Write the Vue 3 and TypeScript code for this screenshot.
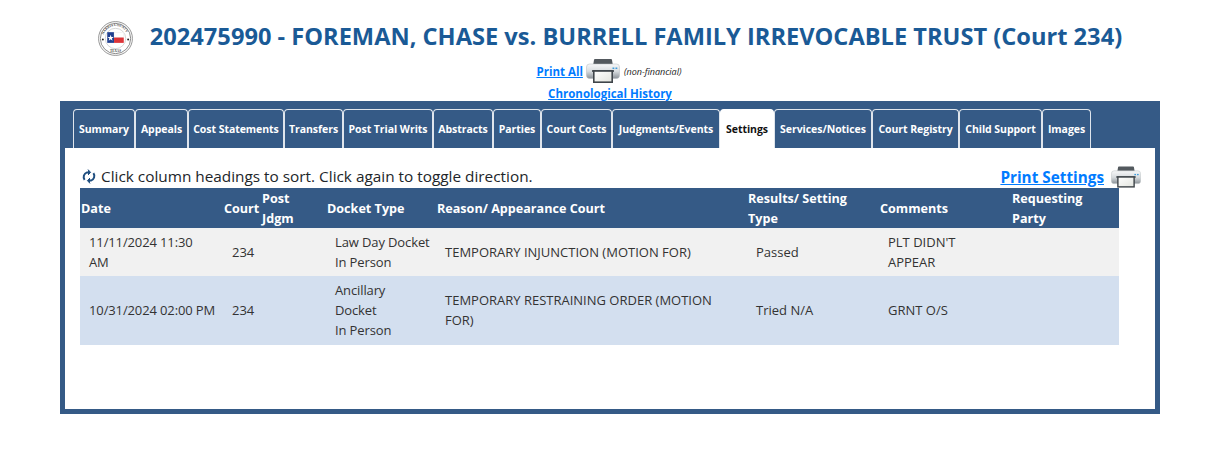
<script setup lang="ts">
interface Row { date: string; court: string; jdgm: string; docket: string; reason: string; result: string; comments: string; party: string }
const tabs: { label: string; width: number; active?: boolean }[] = [
  { label: 'Summary', width: 62 }, { label: 'Appeals', width: 53 }, { label: 'Cost Statements', width: 96 },
  { label: 'Transfers', width: 59 }, { label: 'Post Trial Writs', width: 90 }, { label: 'Abstracts', width: 60 },
  { label: 'Parties', width: 48 }, { label: 'Court Costs', width: 71 }, { label: 'Judgments/Events', width: 108 },
  { label: 'Settings', width: 54, active: true }, { label: 'Services/Notices', width: 98 }, { label: 'Court Registry', width: 87 },
  { label: 'Child Support', width: 83 }, { label: 'Images', width: 49 },
]
const rows: Row[] = [
  { date: '11/11/2024 11:30\nAM', court: '234', jdgm: '', docket: 'Law Day Docket\nIn Person', reason: 'TEMPORARY INJUNCTION (MOTION FOR)', result: 'Passed', comments: "PLT DIDN'T\nAPPEAR", party: '' },
  { date: '10/31/2024 02:00 PM', court: '234', jdgm: '', docket: 'Ancillary\nDocket\nIn Person', reason: 'TEMPORARY RESTRAINING ORDER (MOTION\nFOR)', result: 'Tried N/A', comments: 'GRNT O/S', party: '' },
]
const cols = [143, 38, 65, 111, 311, 132, 132, 107]
</script>

<template>
  <div class="page">
    <svg width="0" height="0" class="defs">
      <defs>
        <linearGradient id="pBody" x1="0" y1="0" x2="0" y2="1">
          <stop offset="0" stop-color="#f7f8f9" /><stop offset="0.5" stop-color="#d8dcdf" /><stop offset="1" stop-color="#8b9298" />
        </linearGradient>
        <linearGradient id="pPaper" x1="0" y1="0" x2="1" y2="1">
          <stop offset="0" stop-color="#ffffff" /><stop offset="1" stop-color="#e2e4de" />
        </linearGradient>
        <g id="printer-shape">
          <path d="M8 1q0-1 1-1h16q1 0 1 1l1 6H7z" fill="#53595e" />
          <rect x="0.5" y="5" width="33" height="14.5" rx="3" fill="url(#pBody)" stroke="#b4b9bd" stroke-width=".5" />
          <rect x="26.5" y="8.5" width="1.8" height="1.5" fill="#3c9bdc" /><rect x="29.5" y="8.5" width="1.8" height="1.5" fill="#3c9bdc" />
          <rect x="6" y="11" width="22" height="2" fill="#555b60" />
          <rect x="7.8" y="12" width="18.4" height="11.2" fill="url(#pPaper)" stroke="#3f454a" stroke-width="1.6" />
        </g>
      </defs>
    </svg>

    <header class="title">
      <svg class="seal" width="35" height="35" viewBox="0 0 36 36">
        <circle cx="18" cy="18" r="17.4" fill="#fff" stroke="#888" stroke-width=".9" />
        <circle cx="18" cy="18" r="15.6" fill="none" stroke="#555" stroke-width=".7" />
        <circle cx="18" cy="18" r="10.5" fill="none" stroke="#aaa" stroke-width=".5" />
        <path id="sealTop" d="M5.2 18a12.8 12.8 0 0 1 25.6 0" fill="none" />
        <text font-size="3.5" font-family="Liberation Serif, serif" font-weight="700" fill="#444"><textPath href="#sealTop" startOffset="4">HARRIS COUNTY</textPath></text>
        <text x="18" y="31.5" font-size="3.4" font-weight="700" font-family="Liberation Serif, serif" text-anchor="middle" fill="#444">TEXAS</text>
        <rect x="9.5" y="11.5" width="7" height="11" fill="#1f3f8f" />
        <rect x="16.5" y="11.5" width="10" height="5.5" fill="#fff" stroke="#ddd" stroke-width=".3" />
        <rect x="16.5" y="17" width="10" height="5.5" fill="#dc3438" />
        <path d="M13 14.2l.8 2.3h2.4l-1.9 1.4.7 2.3-2-1.4-2 1.4.7-2.3-1.9-1.4h2.4z" fill="#fff" />
        <circle cx="5" cy="19" r="1" fill="#222" /><circle cx="31" cy="19" r="1" fill="#222" />
      </svg>
      <h1>202475990 - FOREMAN, CHASE vs. BURRELL FAMILY IRREVOCABLE TRUST (Court 234)</h1>
    </header>

    <div class="print-all">
      <a href="#">Print All</a>
      <svg class="printer" width="34" height="24" viewBox="0 0 34 24"><use href="#printer-shape" /></svg>
      <em>(non-financial)</em>
    </div>
    <div class="chrono"><a href="#">Chronological History</a></div>

    <section class="panel">
      <nav class="tabs">
        <a v-for="t in tabs" :key="t.label" class="tab" :class="{ active: t.active }" :style="{ width: t.width + 'px' }">{{ t.label }}</a>
      </nav>
      <div class="content">
        <div class="hint-row">
          <div class="hint">
            <svg class="refresh" width="14" height="15" viewBox="0 0 14 15" fill="none" stroke="#1f4e7f" stroke-width="2">
              <path d="M2.6 10.8A4.8 4.8 0 0 1 5 3.4h2.4" />
              <path d="M6 .6l2.6 2.8L6 6" fill="#1f4e7f" stroke-width="1" />
              <path d="M11.4 4.2A4.8 4.8 0 0 1 9 11.6H6.6" />
              <path d="M8 14.4l-2.6-2.8L8 9" fill="#1f4e7f" stroke-width="1" />
            </svg>
            <span>Click column headings to sort. Click again to toggle direction.</span>
          </div>
          <div class="print-settings">
            <a href="#">Print Settings</a>
            <svg width="30" height="22" viewBox="0 0 34 24"><use href="#printer-shape" /></svg>
          </div>
        </div>
        <table>
          <colgroup><col v-for="(c, i) in cols" :key="i" :style="{ width: c + 'px' }" /></colgroup>
          <thead>
            <tr>
              <th>Date</th><th>Court</th><th>Post<br />Jdgm</th><th>Docket Type</th>
              <th class="flush">Reason/ Appearance Court</th><th class="flush">Results/ Setting<br />Type</th><th class="flush">Comments</th><th class="flush">Requesting<br />Party</th>
            </tr>
          </thead>
          <tbody>
            <tr v-for="(r, i) in rows" :key="i" :class="i % 2 ? 'even' : 'odd'">
              <td class="tight">{{ r.date }}</td>
              <td>{{ r.court }}</td>
              <td>{{ r.jdgm }}</td>
              <td class="tight">{{ r.docket }}</td>
              <td>{{ r.reason }}</td>
              <td>{{ r.result }}</td>
              <td>{{ r.comments }}</td>
              <td>{{ r.party }}</td>
            </tr>
          </tbody>
        </table>
      </div>
    </section>
  </div>
</template>

<style scoped>
.page { width: 1209px; height: 473px; overflow: hidden; background: #fff; font-family: "Open Sans", "Noto Sans", sans-serif; color: #212529; }
.defs { position: absolute; }
.title { display: flex; align-items: center; justify-content: center; height: 58px; padding: 14px 0 0 11px; box-sizing: border-box; gap: 17px; }
.seal { flex: none; margin-top: 5px; }
h1 { margin: 0; font-size: 23.64px; line-height: 30px; font-weight: 700; color: #1a5a96; white-space: nowrap; }
.print-all { height: 26px; display: flex; align-items: center; justify-content: center; gap: 3px; padding-left: 9px; }
.print-all a, .chrono a { color: #007bff; font-weight: 700; font-size: 11.5px; text-decoration: underline; }
.print-all em { font-size: 9px; margin-left: 1px; color: #222; }
.chrono { text-align: center; height: 17px; line-height: 17px; padding-left: 11px; }
.panel { margin-left: 60px; width: 1100px; height: 313px; box-sizing: border-box; background: #355a86; padding: 8px 5px 5px; display: flex; flex-direction: column; }
.tabs { display: flex; padding-left: 8px; height: 39px; flex: none; }
.tab { box-sizing: border-box; border: 1px solid #dfe5ec; border-bottom: 0; border-radius: 4px 4px 0 0; color: #fff; font-size: 10.5px; font-weight: 700; display: flex; align-items: center; justify-content: center; white-space: nowrap; letter-spacing: -0.05px; }
.tab.active { background: #fff; color: #111; border-color: #fff; }
.content { flex: 1; background: #fff; padding-left: 15px; }
.hint-row { height: 40px; width: 1061px; display: flex; justify-content: space-between; align-items: flex-end; }
.hint { display: flex; align-items: center; gap: 5px; font-size: 15.35px; line-height: 21px; padding: 0 0 1px 2px; }
.print-settings { display: flex; align-items: center; gap: 7px; }
.print-settings a { color: #007bff; font-weight: 700; font-size: 15.3px; text-decoration: underline; }
table { border-collapse: collapse; table-layout: fixed; width: 1039px; font-size: 13px; line-height: 20px; }
thead tr { background: #355a86; color: #fff; height: 40px; }
th { text-align: left; padding: 1px 1px 0; font-weight: 700; font-size: 12.6px; line-height: 19.5px; white-space: nowrap; }
th.flush { padding-left: 0; }
td { padding: 4px 8px; vertical-align: middle; color: #333; white-space: pre; }
td:nth-child(-n+4) { padding-left: 9px; }
td.tight { letter-spacing: -0.12px; }
tr.odd { background: #f1f1f1; }
tr.even { background: #d3dfef; }
tr.even td { padding-bottom: 5px; }
</style>
